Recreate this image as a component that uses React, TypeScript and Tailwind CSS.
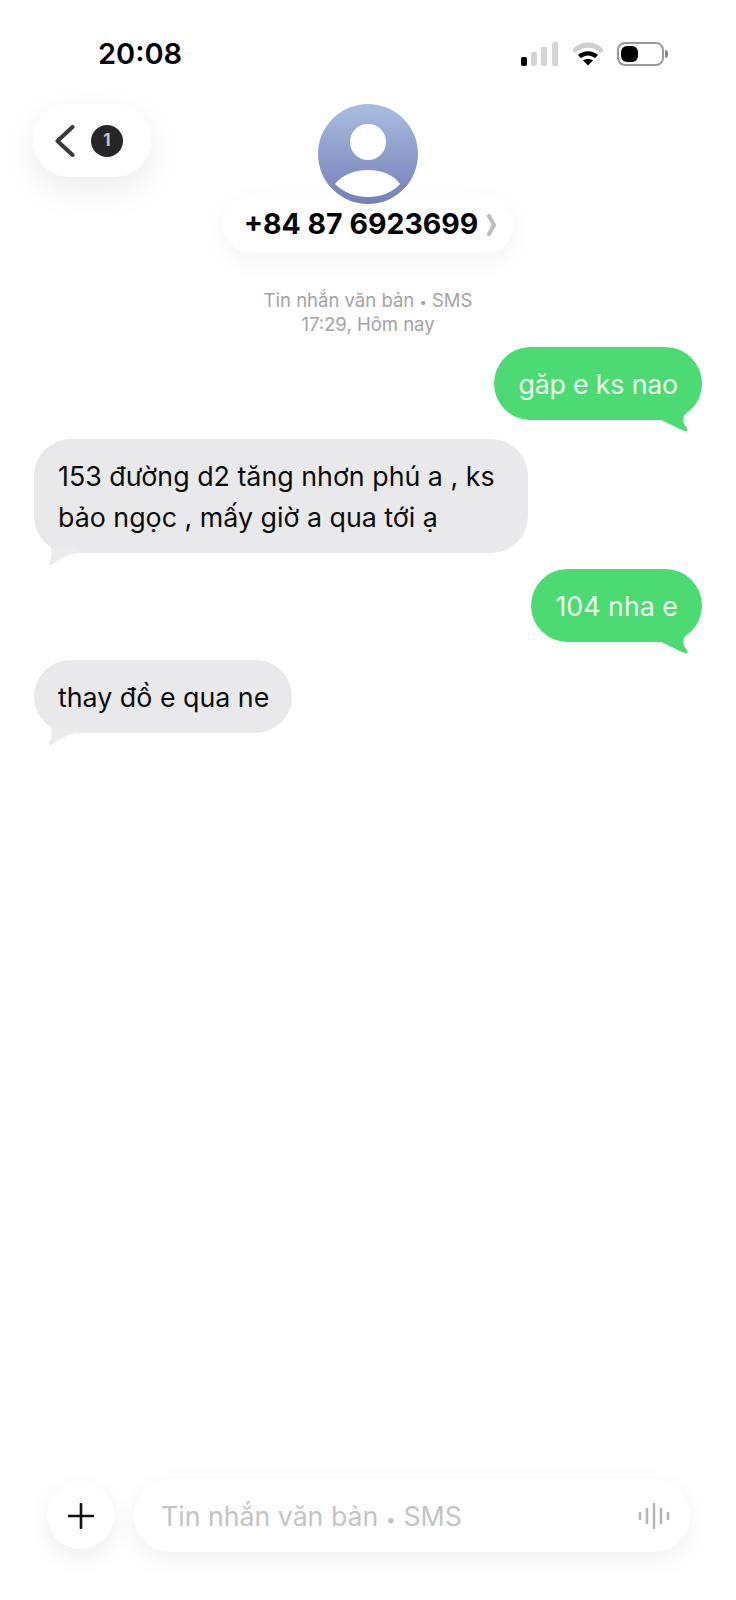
const font = "font-['Inter','Noto_Sans',sans-serif]";

const TailRight = () => (
    <svg className="absolute right-0 top-[65px]" width="50" height="20" viewBox="0 0 50 20">
        <path d="M6 0 L6 7 L8 7.500 L29 17.500 Q33 19.500 35 19 Q36.500 18 34 15 Q29 9 33 2 L33 0 Z" fill="#4cdb72" />
    </svg>
);

const TailLeft = () => (
    <svg className="absolute left-[10px] bottom-[-14px]" width="40" height="20" viewBox="0 0 40 20">
        <path d="M7 0 C8 6 8 11 5 16 Q4 19 7 18 C14 14 22 7 34 6 L34 0 Z" fill="#ebebee" />
    </svg>
);

const Sent = ({ text, tracking = "" }: { text: string; tracking?: string }) => (
    <div className="flex justify-end">
        <div className={`relative h-[73px] rounded-[37px] bg-[#4cdb72] px-6 pt-[2px] flex items-center text-[26.800px] text-[#effcf3] ${tracking}`}>
            {text}
            <TailRight />
        </div>
    </div>
);

const Received = ({ lines, width }: { lines: string[]; width: string }) => (
    <div className="flex justify-start">
        <div className={`relative rounded-[37px] bg-[#e9e9ec] pl-6 pt-[17px] pb-[15px] text-[26.800px] leading-[41px] text-[#0b0b0b] ${width}`}>
            {lines.map((l) => (
                <div key={l}>{l}</div>
            ))}
            <TailLeft />
        </div>
    </div>
);

export default function App() {
    return (
        <div className={`h-[1600px] w-[736px] overflow-hidden bg-white flex flex-col ${font}`}>
            {/* Status bar */}
            <div className="h-[104px] shrink-0 flex items-start justify-between pl-[98px] pr-[68px] pt-[36px]">
                <span className="text-[29px] leading-[36px] font-semibold text-black">20:08</span>
                <div className="flex items-center gap-[13px] mt-[6px]">
                    <svg width="38" height="24" viewBox="0 0 38 24">
                        <rect x="0" y="15" width="6" height="9" rx="2" fill="#000" />
                        <rect x="10" y="10" width="6" height="14" rx="2" fill="#d4d4d4" />
                        <rect x="20" y="5" width="6" height="19" rx="2" fill="#d4d4d4" />
                        <rect x="31" y="0" width="6" height="24" rx="2" fill="#d4d4d4" />
                    </svg>
                    <svg width="32" height="24" viewBox="0 0 32 24">
                        <path d="M0 8 C9 -2 23 -2 32 8 L29 11 C21 4 11 4 3 11 Z" fill="#cfcfcf" />
                        <path d="M6 13 C12 8 20 8 26 13 L23 16 C18.500 12.500 13.500 12.500 9 16 Z" fill="#000" />
                        <path d="M11 18.500 C14 16.500 18 16.500 21 18.500 L16 23.500 Z" fill="#000" />
                    </svg>
                    <div className="flex items-center gap-[1px]">
                        <div className="h-[24px] w-[47px] rounded-[8px] border-[2px] border-[#9a9a9a] p-[2px]">
                            <div className="h-full w-[17px] rounded-[6px] bg-black" />
                        </div>
                        <div className="h-[8px] w-[3px] rounded-r-full bg-[#8a8a8a]" />
                    </div>
                </div>
            </div>

            {/* Header */}
            <div className="h-[149px] shrink-0 grid grid-cols-[1fr_auto_1fr]">
                <div className="pl-[33px]">
                    <div className="h-[73px] w-[118px] rounded-[37px] bg-white shadow-[0_12px_36px_rgba(0,0,0,0.08)] flex items-center pl-[22px] gap-[16px]">
                        <svg width="20" height="32" viewBox="0 0 20 32" fill="none">
                            <path d="M17.500 2 L2.500 16 L17.500 30" stroke="#3a3a3c" strokeWidth="4" strokeLinecap="round" strokeLinejoin="round" />
                        </svg>
                        <div className="h-[32px] w-[32px] rounded-full bg-[#262626] flex items-center justify-center text-[17px] font-bold text-[#c4c4c4]">
                            1
                        </div>
                    </div>
                </div>
                <div className="flex flex-col items-center">
                    <svg className="relative z-10" width="100" height="100" viewBox="0 0 100 100">
                        <defs>
                            <linearGradient id="av" x1="0" y1="0" x2="0" y2="1">
                                <stop offset="0" stopColor="#a9bde0" />
                                <stop offset="1" stopColor="#747fb8" />
                            </linearGradient>
                        </defs>
                        <circle cx="50" cy="50" r="50" fill="url(#av)" />
                        <circle cx="50" cy="38" r="18" fill="#fff" />
                        <path d="M17 80 C25 70 38 66 50 66 C62 66 75 70 82 80 C74 89 62 93 50 93 C38 93 26 89 17 80 Z" fill="#fff" />
                    </svg>
                    <div className="-mt-2 h-[57px] w-[291px] rounded-[29px] bg-white shadow-[0_8px_28px_rgba(0,0,0,0.05)] flex items-center justify-center gap-[9px] pl-[5px]">
                        <span className="text-[28.500px] font-bold text-black">+84 87 6923699</span>
                        <svg width="10" height="22" viewBox="0 0 10 22" fill="none">
                            <path d="M2 2 L7 11 L2 20" stroke="#bdbdbd" strokeWidth="4" strokeLinecap="round" strokeLinejoin="round" />
                        </svg>
                    </div>
                </div>
                <div />
            </div>

            {/* Meta */}
            <div className="mt-[35px] shrink-0 text-center text-[18.500px] leading-[24px] text-[#a3a3a8]">
                <div>
                    Tin nhắn văn bản <span className="text-[13px] leading-none">•</span> SMS
                </div>
                <div>17:29, Hôm nay</div>
            </div>

            {/* Messages */}
            <div className="mt-[11px] flex-1 px-[34px] flex flex-col">
                <Sent text="găp e ks nao" tracking="tracking-[-0.2px]" />
                <div className="mt-[19px]">
                    <Received lines={["153 đường d2 tăng nhơn phú a , ks", "bảo ngọc , mấy giờ a qua tới ạ"]} width="w-[494px]" />
                </div>
                <div className="mt-[16px]">
                    <Sent text="104 nha e" />
                </div>
                <div className="mt-[18px]">
                    <Received lines={["thay đồ e qua ne"]} width="w-[258px]" />
                </div>
            </div>

            {/* Input bar */}
            <div className="shrink-0 h-[121px] pl-[47px] pr-[46px] flex items-start gap-[20px]">
                <div className="h-[67px] w-[67px] mt-[3px] rounded-full bg-white shadow-[0_8px_24px_rgba(0,0,0,0.07)] flex items-center justify-center">
                    <svg width="26" height="26" viewBox="0 0 26 26">
                        <path d="M13 1 V25 M1 13 H25" stroke="#111" strokeWidth="2.600" strokeLinecap="round" />
                    </svg>
                </div>
                <div className="h-[73px] flex-1 rounded-[37px] bg-white shadow-[0_8px_28px_rgba(0,0,0,0.06)] flex items-center justify-between pl-[27px] pr-[20px]">
                    <span className="pt-[2px] text-[26.700px] text-[#c4c4c6]">
                        Tin nhắn văn bản <span className="text-[18px] leading-none">•</span> SMS
                    </span>
                    <svg width="32" height="28" viewBox="0 0 32 28" fill="none" stroke="#b4b4b6" strokeWidth="2.500" strokeLinecap="round">
                        <path d="M2 11 V17 M9 7 V21 M16 2 V26 M23 7 V21 M30 11 V17" />
                    </svg>
                </div>
            </div>
        </div>
    );
}
